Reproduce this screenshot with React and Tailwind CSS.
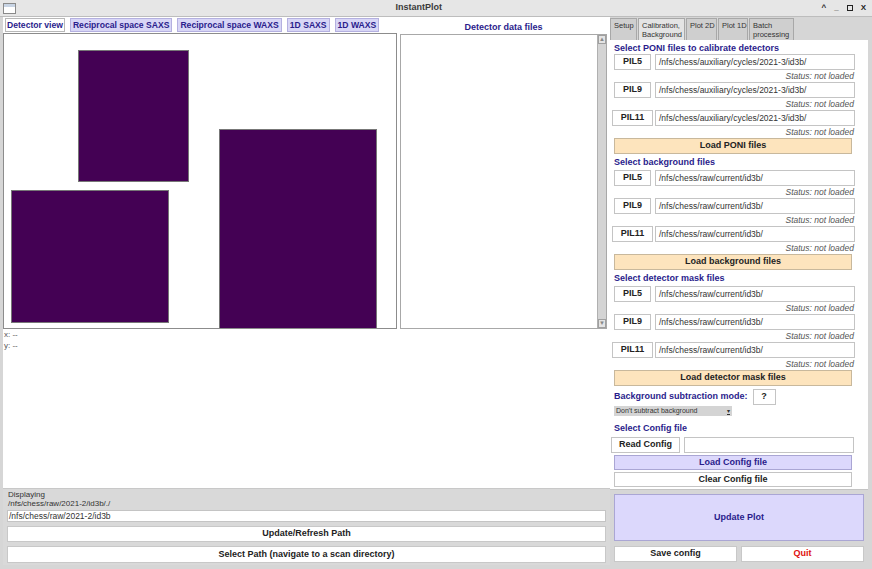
import React from "react";

const font = { fontFamily: '"Liberation Sans", Arial, sans-serif' };

const PlotTab = ({ label, active }) => (
  <div
    className={
      active
        ? "h-[14px] px-[1px] flex items-center border border-[#b8b8b8] bg-white text-[8.6px] font-bold text-[#2a1c8c] whitespace-nowrap"
        : "h-[14px] px-[2px] flex items-center border border-[#b4b0e0] bg-[#d8d6f6] text-[8.6px] font-bold text-[#2a1c8c] whitespace-nowrap"
    }
  >
    {label}
  </div>
);

const SideTab = ({ lines, active, w }) => (
  <div
    className={
      (active ? "bg-[#e4e4e4] " : "bg-[#cfcfcf] ") +
      "h-[22px] border border-[#a8a8a8] border-b-0 px-[3px] pt-[2px] text-[7.5px] leading-[9px] text-[#333] whitespace-nowrap overflow-hidden " +
      w
    }
  >
    {lines.map((l) => (
      <div key={l}>{l}</div>
    ))}
  </div>
);

const FileRow = ({ label, value, wide }) => (
  <div>
    <div className="flex h-[16px] items-center">
      <div
        className={
          (wide ? "w-[41px] ml-[2px] " : "w-[37px] ml-[4px] mr-[2px] ") +
          "h-[16px] border border-[#c4c4c4] bg-white flex items-center justify-center text-[9px] font-bold text-[#222]"
        }
      >
        {label}
      </div>
      <div className="ml-[2px] w-[200px] h-[16px] border border-[#c4c4c4] bg-white flex items-center px-[3px] text-[8.5px] text-[#333]">
        {value}
      </div>
    </div>
    <div className="h-[12px] pr-[14px] flex items-center justify-end text-[8.5px] italic text-[#555]">
      Status: not loaded
    </div>
  </div>
);

const Heading = ({ children, cls }) => (
  <div className={"pl-[4px] text-[9px] font-bold text-[#2a1c8c] " + cls}>{children}</div>
);

const WideBtn = ({ children, cls }) => (
  <div
    className={
      "ml-[4px] w-[238px] flex items-center justify-center border text-[9px] font-bold " + cls
    }
  >
    {children}
  </div>
);

const App = () => {
  const poni = "/nfs/chess/auxiliary/cycles/2021-3/id3b/";
  const raw = "/nfs/chess/raw/current/id3b/";
  return (
    <div style={font} className="w-[872px] h-[569px] flex flex-col bg-[#d6d6d6] overflow-hidden">
      {/* title bar */}
      <div className="h-[17px] flex items-center bg-[#e6e6e6] border-b border-[#bdbdbd] px-[3px]">
        <div className="w-[13px] h-[11px] border border-[#8a8a8a] bg-white flex flex-col">
          <div className="h-[3px] bg-[#c8d4e4]" />
        </div>
        <div className="flex-1 text-center text-[9px] font-bold text-[#3a3a3a]">InstantPlot</div>
        <div className="flex items-center gap-[8px] pr-[3px] text-[8px] font-bold text-[#222]">
          <span>^</span>
          <span>_</span>
          <span className="w-[6px] h-[6px] border border-[#222]" />
          <span>X</span>
        </div>
      </div>

      <div className="flex flex-1 min-h-0">
        {/* left side */}
        <div className="w-[610px] flex flex-col pl-[3px]">
          <div className="flex-1 bg-white flex flex-col">
            <div className="flex">
              <div className="w-[394px] flex flex-col">
                <div className="flex gap-[5px] pl-[2px] pt-[1px] h-[16px]">
                  <PlotTab label="Detector view" active />
                  <PlotTab label="Reciprocal space SAXS" />
                  <PlotTab label="Reciprocal space WAXS" />
                  <PlotTab label="1D SAXS" />
                  <PlotTab label="1D WAXS" />
                </div>
                <div className="relative h-[296px] border border-[#8c8c8c] bg-white overflow-hidden">
                  <div className="absolute left-[74px] top-[16px] w-[111px] h-[132px] bg-[#440154] border border-[#777]" />
                  <div className="absolute left-[7px] top-[156px] w-[158px] h-[133px] bg-[#440154] border border-[#777]" />
                  <div className="absolute left-[215px] top-[95px] w-[158px] h-[210px] bg-[#440154] border border-[#777]" />
                </div>
              </div>
              <div className="ml-[3px] w-[207px] flex flex-col">
                <div className="h-[17px] flex items-end justify-center text-[9px] font-bold text-[#2a1c8c]">
                  Detector data files
                </div>
                <div className="h-[295px] border border-[#a8a8a8] flex justify-end">
                  <div className="w-[9px] bg-[#d4d4d4] border-l border-[#b0b0b0] flex flex-col justify-between">
                    <div className="h-[9px] border border-[#a0a0a0] bg-[#e4e4e4] text-[6px] leading-[7px] text-center text-[#888]">▲</div>
                    <div className="h-[9px] border border-[#a0a0a0] bg-[#e4e4e4] text-[6px] leading-[7px] text-center text-[#888]">▼</div>
                  </div>
                </div>
              </div>
            </div>
            <div className="pl-[1px] text-[8px] leading-[11px] text-[#555]">
              <div>x: --</div>
              <div>y: --</div>
            </div>
          </div>

          {/* bottom path panel */}
          <div className="h-[77px] bg-[#d9d9d9] border-t border-[#c8c8c8] px-[4px] flex flex-col">
            <div className="pl-[1px] pt-[1px] text-[8px] leading-[9px] text-[#333]">Displaying</div>
            <div className="pl-[1px] text-[8px] leading-[9px] text-[#333]">/nfs/chess/raw/2021-2/id3b/./</div>
            <div className="mt-[2px] h-[12px] bg-white border border-[#c4c4c4] flex items-center pl-[1px] text-[8.5px] text-[#333]">
              /nfs/chess/raw/2021-2/id3b
            </div>
            <div className="mt-[4px] h-[16px] bg-white border border-[#c8c8c8] flex items-center justify-center text-[9px] font-bold text-[#222]">
              Update/Refresh Path
            </div>
            <div className="mt-[4px] h-[17px] bg-white border border-[#c8c8c8] flex items-center justify-center text-[9px] font-bold text-[#222]">
              Select Path (navigate to a scan directory)
            </div>
          </div>
          <div className="h-[4px]" />
        </div>

        {/* right side */}
        <div className="w-[258px] flex flex-col">
          <div className="flex pt-[1px] gap-[1px] bg-[#d6d6d6]">
            <SideTab lines={["Setup"]} w="w-[27px]" />
            <SideTab lines={["Calibration,", "Background"]} w="w-[47px]" active />
            <SideTab lines={["Plot 2D"]} w="w-[31px]" />
            <SideTab lines={["Plot 1D"]} w="w-[30px]" />
            <SideTab lines={["Batch", "processing"]} w="w-[45px]" />
          </div>
          <div className="h-[450px] bg-white border-b border-[#c4c4c4] flex flex-col">
            <Heading cls="h-[14px] flex items-center pt-[3px]">Select PONI files to calibrate detectors</Heading>
            <FileRow label="PIL5" value={poni} />
            <FileRow label="PIL9" value={poni} />
            <FileRow label="PIL11" value={poni} wide />
            <WideBtn cls="h-[16px] bg-[#fde4bd] border-[#c8b89c] text-[#222]">Load PONI files</WideBtn>
            <Heading cls="h-[16px] flex items-center pt-[2px]">Select background files</Heading>
            <FileRow label="PIL5" value={raw} />
            <FileRow label="PIL9" value={raw} />
            <FileRow label="PIL11" value={raw} wide />
            <WideBtn cls="h-[16px] bg-[#fde4bd] border-[#c8b89c] text-[#222]">Load background files</WideBtn>
            <Heading cls="h-[16px] flex items-center pt-[2px]">Select detector mask files</Heading>
            <FileRow label="PIL5" value={raw} />
            <FileRow label="PIL9" value={raw} />
            <FileRow label="PIL11" value={raw} wide />
            <WideBtn cls="h-[16px] bg-[#fde4bd] border-[#c8b89c] text-[#222]">Load detector mask files</WideBtn>
            <div className="mt-[3px] h-[16px] flex items-center">
              <Heading cls="">Background subtraction mode:</Heading>
              <div className="ml-[5px] w-[23px] h-[16px] border border-[#c4c4c4] bg-white flex items-center justify-center text-[9px] font-bold text-[#222]">
                ?
              </div>
            </div>
            <div className="ml-[4px] mt-[1px] w-[118px] h-[10px] bg-[#d4d4d4] flex items-center justify-between px-[2px] text-[7px] text-[#333]">
              <span>Don't subtract background</span>
              <span className="text-[6px] leading-[6px] border-b border-[#333]">▾</span>
            </div>
            <Heading cls="h-[21px] flex items-end pb-[2px]">Select Config file</Heading>
            <div className="flex h-[16px]">
              <div className="ml-[1px] w-[69px] h-[16px] border border-[#c4c4c4] bg-white flex items-center justify-center text-[9px] font-bold text-[#222]">
                Read Config
              </div>
              <div className="ml-[4px] w-[170px] h-[16px] border border-[#c4c4c4] bg-white" />
            </div>
            <div className="mt-[2px]">
              <WideBtn cls="h-[15px] bg-[#dcd8fc] border-[#aaa6d4] text-[#2a1c8c]">Load Config file</WideBtn>
            </div>
            <div className="mt-[2px]">
              <WideBtn cls="h-[15px] bg-white border-[#c4c4c4] text-[#222]">Clear Config file</WideBtn>
            </div>
          </div>
          <div className="flex-1 flex flex-col pl-[4px] pr-[4px]">
            <div className="mt-[4px] h-[47px] bg-[#dcd8fc] border border-[#aaa6d4] flex items-center justify-center text-[9px] font-bold text-[#2a1c8c]">
              Update Plot
            </div>
            <div className="mt-[5px] flex gap-[4px]">
              <div className="flex-1 h-[16px] bg-white border border-[#c8c8c8] flex items-center justify-center text-[9px] font-bold text-[#222]">
                Save config
              </div>
              <div className="flex-1 h-[16px] bg-white border border-[#c8c8c8] flex items-center justify-center text-[9px] font-bold text-[#e01010]">
                Quit
              </div>
            </div>
          </div>
        </div>
      </div>
    </div>
  );
};

export default App;
